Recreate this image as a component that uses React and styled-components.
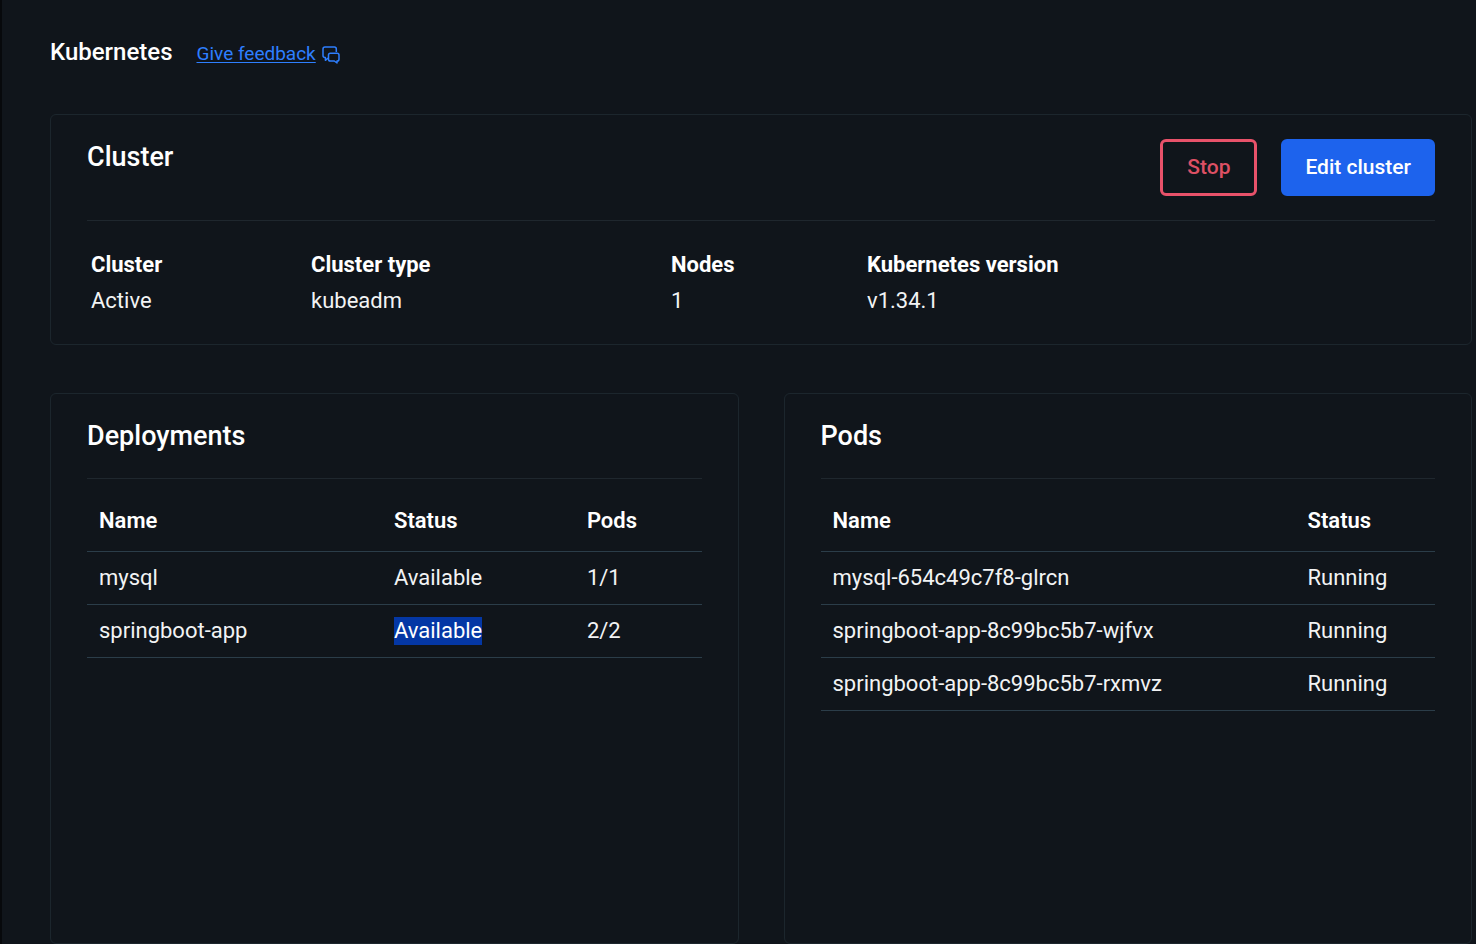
import React from "react";
import styled, { createGlobalStyle } from "styled-components";

const GlobalStyle = createGlobalStyle`
  *, *::before, *::after { box-sizing: border-box; }
  body {
    margin: 0;
    background: #10151b;
    color: #ffffff;
    font-family: Roboto, "Liberation Sans", sans-serif;
    font-size: 22px;
    line-height: 28px;
  }
`;

const Page = styled.main`
  display: flex;
  flex-direction: column;
  min-height: 100vh;
  padding: 32px 4px 0 48px;
  border-left: 2px solid #07090c;
`;

const PageHeader = styled.header`
  display: flex;
  align-items: center;
  gap: 24px;
  height: 40px;
  margin-bottom: 42px;
`;

const PageTitle = styled.h1`
  margin: 0;
  font-size: 24px;
  font-weight: 500;
  line-height: 40px;
`;

const FeedbackLink = styled.a`
  display: flex;
  align-items: center;
  gap: 6px;
  padding-top: 4px;
  color: #2e7fff;
  font-size: 19px;
  text-decoration: none;

  span { text-decoration: underline; text-underline-offset: 2px; text-decoration-thickness: 1px; }
  svg { margin-top: 2px; }
`;

const Card = styled.section`
  padding: 24px 36px;
  border: 1px solid #1c262d;
  border-radius: 6px;
`;

const CardHeader = styled.div`
  display: flex;
  align-items: flex-start;
  justify-content: space-between;
  padding-bottom: 24px;
  border-bottom: 1px solid #1f272e;
`;

const CardTitle = styled.h2`
  margin: 0;
  font-size: 27px;
  font-weight: 500;
  line-height: 36px;
`;

const Actions = styled.div`
  display: flex;
  gap: 24px;
`;

const Button = styled.button`
  height: 57px;
  padding: 0 ${(p) => (p.$outlined ? 24 : 21)}px 2px;
  border: 3px solid ${(p) => (p.$outlined ? "#e8526a" : "#1d63ed")};
  border-radius: 6px;
  background: ${(p) => (p.$outlined ? "transparent" : "#1d63ed")};
  color: ${(p) => (p.$outlined ? "#dd5064" : "#ffffff")};
  font: 500 21px/28px Roboto, "Liberation Sans", sans-serif;
  cursor: pointer;
`;

const Facts = styled.dl`
  display: grid;
  grid-template-columns: 220fr 360fr 196fr 568fr;
  margin: 26px 0 0;
  padding: 0 0 1px 4px;
`;

const Fact = styled.div`
  line-height: 36px;

  dt { font-weight: 700; }
  dd { margin: 0; color: #f2f3f4; }
`;

const Columns = styled.div`
  display: grid;
  grid-template-columns: 1fr 1fr;
  flex: 1;
  gap: 45px;
  margin-top: 48px;
`;

const Table = styled.table`
  width: 100%;
  margin-top: 12px;
  border-collapse: separate;
  border-spacing: 0;
  table-layout: fixed;
`;

const HeadCell = styled.th`
  width: ${(p) => p.$width};
  height: 61px;
  padding: 0 12px;
  border-bottom: 1px solid #2b3d49;
  font-weight: 600;
  text-align: left;
`;

const Cell = styled.td`
  height: 53px;
  padding: 0 12px;
  border-bottom: 1px solid #2b3d49;
  color: #f2f3f4;
  white-space: nowrap;
`;

const Selected = styled.mark`
  display: inline-block;
  background: #0437a5;
  color: #ffffff;
`;

function ChatIcon() {
  return (
    <svg width="18" height="18" viewBox="0 0 18 18" fill="none" stroke="currentColor" strokeWidth="1.5" strokeLinejoin="round" aria-hidden="true">
      <path d="M14.3 6V3Q14.3 1 12.3 1H3Q1 1 1 3V9.5Q1 11.5 3 11.5H3.4V14.3L6.2 12" />
      <path d="M8.3 7.2H15.2Q17 7.2 17 9V13.2Q17 15 15.2 15H15V17L12.3 15H8.3Q6.5 15 6.5 13.2V9Q6.5 7.2 8.3 7.2Z" />
    </svg>
  );
}

const facts = [
  ["Cluster", "Active"],
  ["Cluster type", "kubeadm"],
  ["Nodes", "1"],
  ["Kubernetes version", "v1.34.1"],
];

const deploymentColumns = [
  { label: "Name", width: "48%" },
  { label: "Status", width: "31.4%" },
  { label: "Pods", width: "20.6%" },
];

const deployments = [
  ["mysql", "Available", "1/1"],
  ["springboot-app", <Selected key="status">Available</Selected>, "2/2"],
];

const podColumns = [
  { label: "Name", width: "77.3%" },
  { label: "Status", width: "22.7%" },
];

const pods = [
  ["mysql-654c49c7f8-glrcn", "Running"],
  ["springboot-app-8c99bc5b7-wjfvx", "Running"],
  ["springboot-app-8c99bc5b7-rxmvz", "Running"],
];

function ResourceCard({ title, columns, rows }) {
  return (
    <Card aria-label={title}>
      <CardHeader>
        <CardTitle>{title}</CardTitle>
      </CardHeader>
      <Table>
        <thead>
          <tr>
            {columns.map((c) => (
              <HeadCell key={c.label} scope="col" $width={c.width}>{c.label}</HeadCell>
            ))}
          </tr>
        </thead>
        <tbody>
          {rows.map((row) => (
            <tr key={row[0]}>
              {row.map((value, i) => <Cell key={i}>{value}</Cell>)}
            </tr>
          ))}
        </tbody>
      </Table>
    </Card>
  );
}

export default function App() {
  return (
    <>
      <GlobalStyle />
      <Page>
        <PageHeader>
          <PageTitle>Kubernetes</PageTitle>
          <FeedbackLink href="#feedback">
            <span>Give feedback</span>
            <ChatIcon />
          </FeedbackLink>
        </PageHeader>
        <Card aria-label="Cluster">
          <CardHeader>
            <CardTitle>Cluster</CardTitle>
            <Actions>
              <Button type="button" $outlined>Stop</Button>
              <Button type="button">Edit cluster</Button>
            </Actions>
          </CardHeader>
          <Facts>
            {facts.map(([label, value]) => (
              <Fact key={label}>
                <dt>{label}</dt>
                <dd>{value}</dd>
              </Fact>
            ))}
          </Facts>
        </Card>
        <Columns>
          <ResourceCard title="Deployments" columns={deploymentColumns} rows={deployments} />
          <ResourceCard title="Pods" columns={podColumns} rows={pods} />
        </Columns>
      </Page>
    </>
  );
}
